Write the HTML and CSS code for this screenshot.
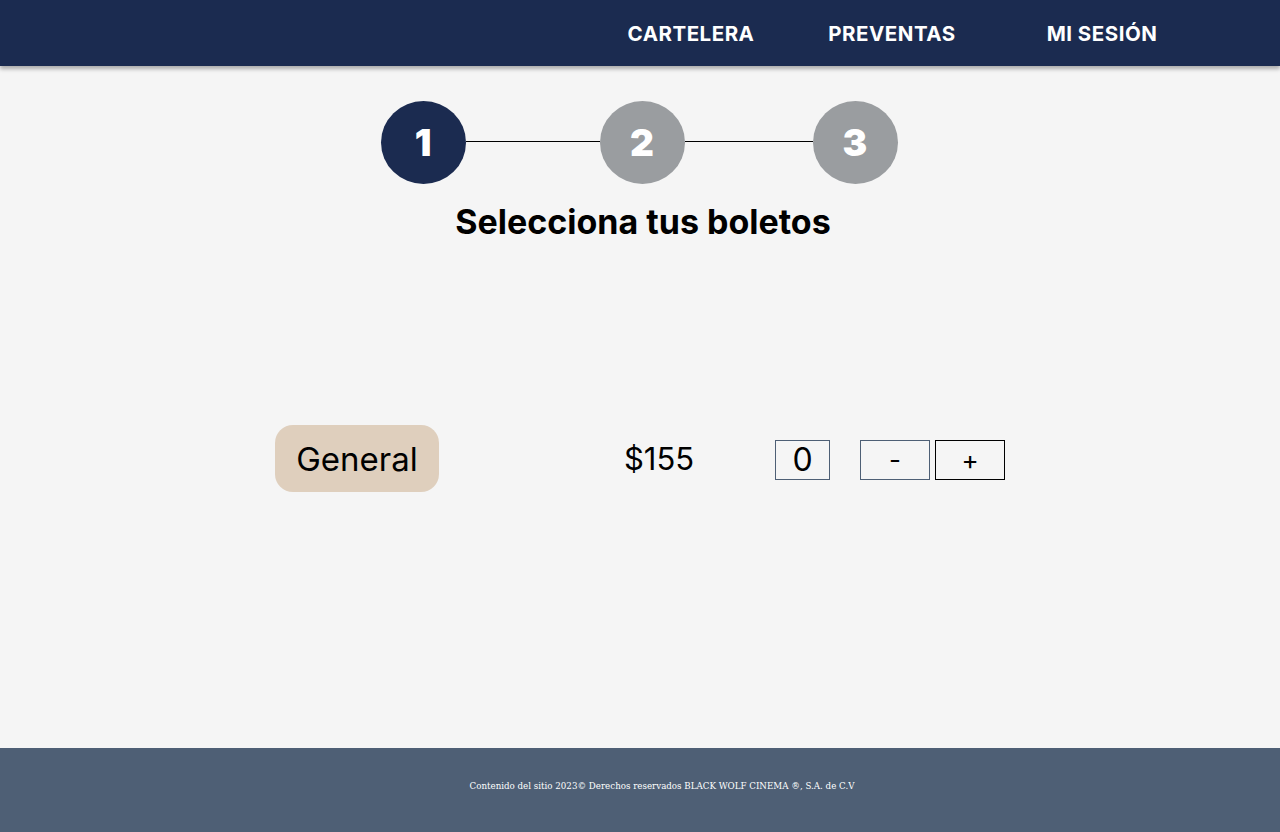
FILE: index.html
```html
<!DOCTYPE html>
<html lang="es">
<head>
<meta charset="utf-8">
<title>Selecciona tus boletos</title>
<link rel="stylesheet" href="styles.css">
</head>
<body>
<header class="topbar">
  <nav class="nav">
    <a class="nav-item nav-cartelera" href="#">CARTELERA</a>
    <a class="nav-item nav-preventas" href="#">PREVENTAS</a>
    <a class="nav-item nav-sesion" href="#">MI SESIÓN</a>
  </nav>
</header>
<main class="main">
  <div class="steps">
    <div class="step active">1</div>
    <div class="step-line line-a"></div>
    <div class="step">2</div>
    <div class="step-line line-b"></div>
    <div class="step">3</div>
  </div>
  <h1 class="title">Selecciona tus boletos</h1>
  <div class="ticket-row">
    <div class="ticket-type">General</div>
    <div class="price">$155</div>
    <div class="qty">0</div>
    <button class="btn minus">-</button>
    <button class="btn plus">+</button>
  </div>
</main>
<footer class="footer">
  <p class="footer-text">Contenido del sitio 2023© Derechos reservados BLACK WOLF CINEMA ®, S.A. de C.V</p>
</footer>
</body>
</html>
```

FILE: styles.css
```css
* { box-sizing: border-box; }
html, body { margin: 0; padding: 0; }
body {
  background: #f5f5f5;
  font-family: Inter, "DejaVu Sans", sans-serif;
  color: #000;
  height: 832px;
  display: flex;
  flex-direction: column;
}
.topbar {
  height: 66px;
  background: #1b2b50;
  box-shadow: 0 3px 4px rgba(0,0,0,0.3);
  display: flex;
  justify-content: flex-end;
  align-items: center;
  padding-right: 69px;
  position: relative;
  z-index: 1;
}
.nav { display: flex; }
.nav-item {
  text-align: center;
  color: #fff;
  text-decoration: none;
  font-weight: 700;
  font-size: 20.5px;
  letter-spacing: 0.5px;
}
.nav-cartelera { width: 200px; }
.nav-preventas { width: 202px; }
.nav-sesion { width: 218px; }
.main {
  flex: 1;
  display: flex;
  flex-direction: column;
  align-items: center;
  padding-top: 35px;
}
.steps {
  display: flex;
  align-items: center;
  margin-left: -2px;
}
.step {
  width: 85px;
  height: 83px;
  border-radius: 50%;
  background: #9a9da0;
  color: #fff;
  display: flex;
  align-items: center;
  justify-content: center;
  font-size: 37px;
  font-weight: 900;
}
.step.active { background: #1b2b50; }
.step-line { height: 1px; background: #000; margin-top: -2px; }
.line-a { width: 134px; }
.line-b { width: 128px; }
.title {
  margin: 17px 0 0;
  font-size: 34px;
  font-weight: 700;
  line-height: 42px;
  margin-left: 6px;
}
.ticket-row {
  align-self: stretch;
  display: flex;
  align-items: center;
  padding-left: 275px;
  margin-top: 182px;
}
.ticket-type {
  width: 164px;
  height: 67px;
  background: #dfcfbd;
  border-radius: 18px;
  display: flex;
  align-items: center;
  justify-content: center;
  font-size: 33px;
}
.price {
  margin-left: 170px;
  width: 100px;
  text-align: center;
  font-size: 31px;
}
.qty {
  margin-left: 66px;
  margin-top: 2px;
  width: 55px;
  height: 40px;
  border: 1px solid #4e5f75;
  display: flex;
  align-items: center;
  justify-content: center;
  font-size: 32px;
}
.btn {
  width: 70px;
  height: 40px;
  margin-top: 2px;
  background: transparent;
  font-family: inherit;
  font-size: 26px;
  color: #000;
  padding: 0;
  display: flex;
  align-items: center;
  justify-content: center;
}
.minus { margin-left: 30px; border: 1px solid #4e5f75; }
.plus { margin-left: 5px; border: 1px solid #000; }
.footer {
  height: 84px;
  background: #4e5f75;
  display: flex;
  justify-content: center;
  align-items: center;
}
.footer-text {
  margin: 0 0 8px 44px;
  color: #fff;
  font-family: "DejaVu Serif", serif;
  font-size: 8.7px;
}
```
